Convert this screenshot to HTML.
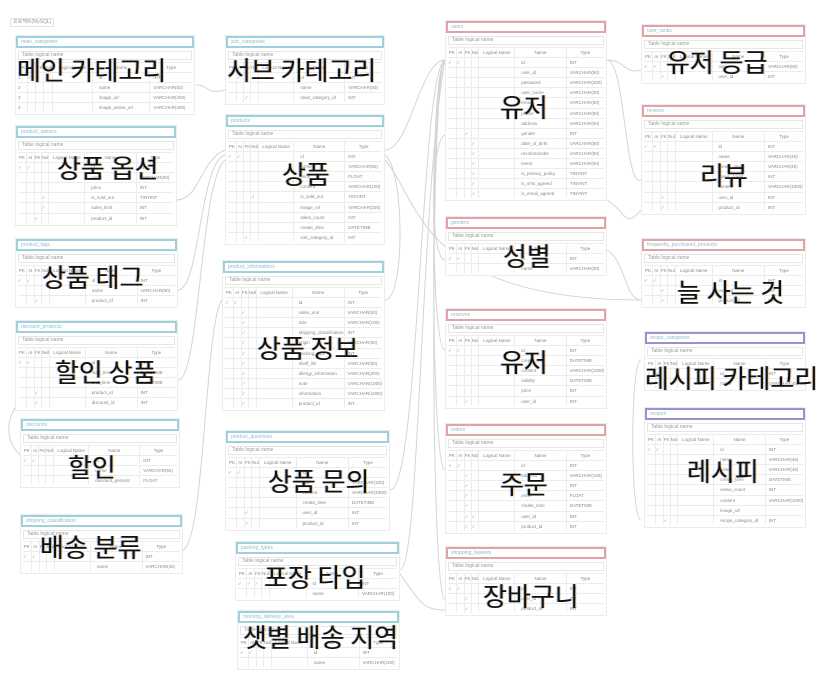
<!DOCTYPE html>
<html><head><meta charset="utf-8"><style>
*{margin:0;padding:0;box-sizing:border-box}
body{width:834px;height:677px;background:#fff;position:relative;overflow:hidden;font-family:"Liberation Sans",sans-serif}
.t{position:absolute;background:#fff;border:1px solid #ececec;padding:0 2px 2px}
.ti{height:12px;border:2px solid #9fd0de;font-size:5px;color:#8cc0cc;line-height:8px;padding-left:3px;margin:0 -2px}
.red .ti{border-color:#e3a2a6}.pur .ti{border-color:#9d8fd6}
.lg{height:9px;border:1px solid #e6e6e6;margin:3px 0 2px;font-size:5px;color:#999;line-height:7px;padding-left:3px}
.r{display:flex;height:10.1px;border-top:1px solid #ececec;font-size:4.5px;color:#888;line-height:9px}
.r i{font-style:normal;border-left:1px solid #ececec;overflow:hidden;white-space:nowrap;color:#5aa9c0}
.r i:nth-child(1){width:5%;border-left:none}.r i:nth-child(2){width:5%}.r i:nth-child(3){width:4.5%}.r i:nth-child(4){width:5%}
.r i:nth-child(5){width:23%}.r i:nth-child(6){width:33%;padding-left:6px;color:#888}.r i:nth-child(7){flex:1;padding-left:3px;color:#888}
.h i{color:#888!important;text-align:center;padding-left:0!important}
.L{position:absolute;font-family:"Noto Sans CJK KR","NanumGothic",sans-serif;font-size:26px;line-height:30px;color:#111;white-space:nowrap;text-shadow:1px 0 0 rgba(230,150,40,.5),-1px 0 0 rgba(40,120,230,.4)}
svg{position:absolute;left:0;top:0}
</style></head><body>
<div style="position:absolute;left:10px;top:18px;width:44px;height:9px;border:1px solid #e2e2e2;font-size:5px;color:#999;line-height:7px;padding-left:2px">프로젝트(MySQL)</div>
<svg width="834" height="677" fill="none" stroke="#d4d4d4" stroke-width="1">
<path d="M196 85 C210 85 205 95 225 90"/><path d="M176 200 C200 200 200 160 225 150"/><path d="M178 290 C200 290 200 160 225 155"/>
<path d="M178 380 C200 380 200 180 225 160"/><path d="M20 400 C5 420 5 440 20 455"/><path d="M183 550 C205 540 205 320 222 300"/>
<path d="M385 150 C410 150 420 60 445 60"/><path d="M385 300 C405 300 405 170 385 155"/><path d="M390 490 C420 490 420 70 445 60"/>
<path d="M400 570 C420 570 420 200 445 60"/><path d="M607 60 C625 60 625 75 641 70"/><path d="M607 60 C625 60 625 190 641 180"/>
<path d="M607 250 C625 260 625 300 641 300"/><path d="M445 260 C430 260 430 140 445 135"/><path d="M445 350 C430 350 430 70 445 60"/>
<path d="M445 470 C430 470 430 70 445 60"/><path d="M445 600 C430 600 430 70 445 60"/><path d="M641 360 C630 360 630 520 641 520"/>
<path d="M607 200 C625 210 625 230 641 210"/><path d="M390 560 C420 600 420 610 445 610"/><path d="M385 160 C420 200 420 300 641 300"/>
</svg>

<div class="t" style="left:15px;top:35px;width:180px"><div class="ti">main_categories</div><div class="lg">Table logical name</div>
<div class="r h"><i>PK</i><i>AI</i><i>FK</i><i>Null</i><i>Logical Name</i><i>Name</i><i>Type</i></div>
<div class="r"><i>1</i><i>✓</i><i>✓</i><i></i><i></i><i>id</i><i>INT</i></div><div class="r"><i>2</i><i></i><i></i><i></i><i></i><i>name</i><i>VARCHAR(50)</i></div><div class="r"><i>3</i><i></i><i></i><i></i><i></i><i>image_url</i><i>VARCHAR(200)</i></div><div class="r"><i>4</i><i></i><i></i><i></i><i></i><i>image_active_url</i><i>VARCHAR(200)</i></div></div>

<div class="t" style="left:15px;top:125px;width:162px"><div class="ti">product_options</div><div class="lg">Table logical name</div>
<div class="r h"><i>PK</i><i>AI</i><i>FK</i><i>Null</i><i>Logical Name</i><i>Name</i><i>Type</i></div>
<div class="r"><i>✓</i><i>✓</i><i></i><i></i><i></i><i>id</i><i>INT</i></div><div class="r"><i></i><i></i><i></i><i></i><i></i><i>name</i><i>VARCHAR(50)</i></div><div class="r"><i></i><i></i><i></i><i></i><i></i><i>price</i><i>INT</i></div><div class="r"><i></i><i></i><i></i><i>✓</i><i></i><i>is_sold_out</i><i>TINYINT</i></div><div class="r"><i></i><i></i><i></i><i>✓</i><i></i><i>sales_limit</i><i>INT</i></div><div class="r"><i></i><i></i><i>✓</i><i></i><i></i><i>product_id</i><i>INT</i></div></div>

<div class="t" style="left:15px;top:238px;width:163px"><div class="ti">product_tags</div><div class="lg">Table logical name</div>
<div class="r h"><i>PK</i><i>AI</i><i>FK</i><i>Null</i><i>Logical Name</i><i>Name</i><i>Type</i></div>
<div class="r"><i>✓</i><i>✓</i><i></i><i></i><i></i><i>id</i><i>INT</i></div><div class="r"><i></i><i></i><i></i><i></i><i></i><i>name</i><i>VARCHAR(50)</i></div><div class="r"><i></i><i></i><i>✓</i><i></i><i></i><i>product_id</i><i>INT</i></div></div>

<div class="t" style="left:15px;top:320px;width:163px"><div class="ti">discount_products</div><div class="lg">Table logical name</div>
<div class="r h"><i>PK</i><i>AI</i><i>FK</i><i>Null</i><i>Logical Name</i><i>Name</i><i>Type</i></div>
<div class="r"><i>✓</i><i>✓</i><i></i><i></i><i></i><i>id</i><i>INT</i></div><div class="r"><i></i><i></i><i></i><i></i><i></i><i>start_time</i><i>DATETIME</i></div><div class="r"><i></i><i></i><i></i><i></i><i></i><i>end_time</i><i>DATETIME</i></div><div class="r"><i></i><i></i><i>✓</i><i></i><i></i><i>product_id</i><i>INT</i></div><div class="r"><i></i><i></i><i>✓</i><i></i><i></i><i>discount_id</i><i>INT</i></div></div>

<div class="t" style="left:20px;top:418px;width:160px"><div class="ti">discounts</div><div class="lg">Table logical name</div>
<div class="r h"><i>PK</i><i>AI</i><i>FK</i><i>Null</i><i>Logical Name</i><i>Name</i><i>Type</i></div>
<div class="r"><i>✓</i><i>✓</i><i></i><i></i><i></i><i>id</i><i>INT</i></div><div class="r"><i></i><i></i><i></i><i></i><i></i><i>name</i><i>VARCHAR(50)</i></div><div class="r"><i></i><i></i><i></i><i></i><i></i><i>discount_percent</i><i>FLOAT</i></div></div>

<div class="t" style="left:20px;top:514px;width:163px"><div class="ti">shipping_classification</div><div class="lg">Table logical name</div>
<div class="r h"><i>PK</i><i>AI</i><i>FK</i><i>Null</i><i>Logical Name</i><i>Name</i><i>Type</i></div>
<div class="r"><i>✓</i><i>✓</i><i></i><i></i><i></i><i>id</i><i>INT</i></div><div class="r"><i></i><i></i><i></i><i></i><i></i><i>name</i><i>VARCHAR(45)</i></div></div>

<div class="t" style="left:225px;top:35px;width:160px"><div class="ti">sub_categories</div><div class="lg">Table logical name</div>
<div class="r h"><i>PK</i><i>AI</i><i>FK</i><i>Null</i><i>Logical Name</i><i>Name</i><i>Type</i></div>
<div class="r"><i>✓</i><i>✓</i><i></i><i></i><i></i><i>id</i><i>INT</i></div><div class="r"><i></i><i></i><i></i><i></i><i></i><i>name</i><i>VARCHAR(50)</i></div><div class="r"><i></i><i></i><i>✓</i><i></i><i></i><i>main_category_id</i><i>INT</i></div></div>

<div class="t" style="left:225px;top:114px;width:160px"><div class="ti">products</div><div class="lg">Table logical name</div>
<div class="r h"><i>PK</i><i>AI</i><i>FK</i><i>Null</i><i>Logical Name</i><i>Name</i><i>Type</i></div>
<div class="r"><i>✓</i><i>✓</i><i></i><i></i><i></i><i>id</i><i>INT</i></div><div class="r"><i></i><i></i><i></i><i></i><i></i><i>name</i><i>VARCHAR(50)</i></div><div class="r"><i></i><i></i><i></i><i></i><i></i><i>price</i><i>FLOAT</i></div><div class="r"><i></i><i></i><i></i><i></i><i></i><i>content</i><i>VARCHAR(100)</i></div><div class="r"><i></i><i></i><i></i><i>✓</i><i></i><i>is_sold_out</i><i>TINYINT</i></div><div class="r"><i></i><i></i><i></i><i></i><i></i><i>image_url</i><i>VARCHAR(200)</i></div><div class="r"><i></i><i></i><i></i><i></i><i></i><i>sales_count</i><i>INT</i></div><div class="r"><i></i><i></i><i></i><i></i><i></i><i>create_time</i><i>DATETIME</i></div><div class="r"><i></i><i></i><i>✓</i><i></i><i></i><i>sub_category_id</i><i>INT</i></div></div>

<div class="t" style="left:222px;top:260px;width:163px"><div class="ti">product_informations</div><div class="lg">Table logical name</div>
<div class="r h"><i>PK</i><i>AI</i><i>FK</i><i>Null</i><i>Logical Name</i><i>Name</i><i>Type</i></div>
<div class="r"><i>✓</i><i>✓</i><i></i><i></i><i></i><i>id</i><i>INT</i></div><div class="r"><i></i><i></i><i>✓</i><i></i><i></i><i>sales_unit</i><i>VARCHAR(50)</i></div><div class="r"><i></i><i></i><i>✓</i><i></i><i></i><i>size</i><i>VARCHAR(100)</i></div><div class="r"><i></i><i></i><i>✓</i><i></i><i></i><i>shipping_classification</i><i>INT</i></div><div class="r"><i></i><i></i><i>✓</i><i></i><i></i><i>origin</i><i>VARCHAR(50)</i></div><div class="r"><i></i><i></i><i>✓</i><i></i><i></i><i>packing_type</i><i>INT</i></div><div class="r"><i></i><i></i><i>✓</i><i></i><i></i><i>shelf_life</i><i>VARCHAR(50)</i></div><div class="r"><i></i><i></i><i>✓</i><i></i><i></i><i>allergy_information</i><i>VARCHAR(200)</i></div><div class="r"><i></i><i></i><i>✓</i><i></i><i></i><i>note</i><i>VARCHAR(1000)</i></div><div class="r"><i></i><i></i><i>✓</i><i></i><i></i><i>information</i><i>VARCHAR(1000)</i></div><div class="r"><i></i><i></i><i>✓</i><i></i><i></i><i>product_id</i><i>INT</i></div></div>

<div class="t" style="left:225px;top:430px;width:165px"><div class="ti">product_questions</div><div class="lg">Table logical name</div>
<div class="r h"><i>PK</i><i>AI</i><i>FK</i><i>Null</i><i>Logical Name</i><i>Name</i><i>Type</i></div>
<div class="r"><i>✓</i><i>✓</i><i></i><i></i><i></i><i>id</i><i>INT</i></div><div class="r"><i></i><i></i><i></i><i></i><i></i><i>title</i><i>VARCHAR(100)</i></div><div class="r"><i></i><i></i><i></i><i></i><i></i><i>content</i><i>VARCHAR(1000)</i></div><div class="r"><i></i><i></i><i></i><i></i><i></i><i>create_time</i><i>DATETIME</i></div><div class="r"><i></i><i></i><i>✓</i><i></i><i></i><i>user_id</i><i>INT</i></div><div class="r"><i></i><i></i><i>✓</i><i></i><i></i><i>product_id</i><i>INT</i></div></div>

<div class="t" style="left:235px;top:541px;width:165px"><div class="ti">packing_types</div><div class="lg">Table logical name</div>
<div class="r h"><i>PK</i><i>AI</i><i>FK</i><i>Null</i><i>Logical Name</i><i>Name</i><i>Type</i></div>
<div class="r"><i>✓</i><i>✓</i><i>✓</i><i></i><i></i><i>id</i><i>INT</i></div><div class="r"><i></i><i></i><i></i><i></i><i></i><i>name</i><i>VARCHAR(100)</i></div></div>

<div class="t" style="left:237px;top:610px;width:163px"><div class="ti">morning_delivery_area</div><div class="lg">Table logical name</div>
<div class="r h"><i>PK</i><i>AI</i><i>FK</i><i>Null</i><i>Logical Name</i><i>Name</i><i>Type</i></div>
<div class="r"><i>✓</i><i>✓</i><i></i><i></i><i></i><i>id</i><i>INT</i></div><div class="r"><i></i><i></i><i></i><i></i><i></i><i>name</i><i>VARCHAR(100)</i></div></div>

<div class="t red" style="left:445px;top:20px;width:162px"><div class="ti">users</div><div class="lg">Table logical name</div>
<div class="r h"><i>PK</i><i>AI</i><i>FK</i><i>Null</i><i>Logical Name</i><i>Name</i><i>Type</i></div>
<div class="r"><i>✓</i><i>✓</i><i></i><i></i><i></i><i>id</i><i>INT</i></div><div class="r"><i></i><i></i><i></i><i></i><i></i><i>user_id</i><i>VARCHAR(50)</i></div><div class="r"><i></i><i></i><i></i><i></i><i></i><i>password</i><i>VARCHAR(200)</i></div><div class="r"><i></i><i></i><i></i><i></i><i></i><i>user_name</i><i>VARCHAR(50)</i></div><div class="r"><i></i><i></i><i></i><i></i><i></i><i>email</i><i>VARCHAR(50)</i></div><div class="r"><i></i><i></i><i></i><i></i><i></i><i>phone</i><i>VARCHAR(50)</i></div><div class="r"><i></i><i></i><i></i><i></i><i></i><i>address</i><i>VARCHAR(50)</i></div><div class="r"><i></i><i></i><i>✓</i><i></i><i></i><i>gender</i><i>INT</i></div><div class="r"><i></i><i></i><i></i><i>✓</i><i></i><i>date_of_birth</i><i>VARCHAR(50)</i></div><div class="r"><i></i><i></i><i></i><i>✓</i><i></i><i>recommender</i><i>VARCHAR(50)</i></div><div class="r"><i></i><i></i><i></i><i>✓</i><i></i><i>event</i><i>VARCHAR(50)</i></div><div class="r"><i></i><i></i><i></i><i>✓</i><i></i><i>is_privacy_policy</i><i>TINYINT</i></div><div class="r"><i></i><i></i><i></i><i>✓</i><i></i><i>is_sms_agreed</i><i>TINYINT</i></div><div class="r"><i></i><i></i><i></i><i>✓</i><i></i><i>is_email_agreed</i><i>TINYINT</i></div></div>

<div class="t red" style="left:445px;top:216px;width:162px"><div class="ti">genders</div><div class="lg">Table logical name</div>
<div class="r h"><i>PK</i><i>AI</i><i>FK</i><i>Null</i><i>Logical Name</i><i>Name</i><i>Type</i></div>
<div class="r"><i>✓</i><i>✓</i><i></i><i></i><i></i><i>id</i><i>INT</i></div><div class="r"><i></i><i></i><i></i><i></i><i></i><i>name</i><i>VARCHAR(50)</i></div></div>

<div class="t red" style="left:445px;top:308px;width:162px"><div class="ti">reserves</div><div class="lg">Table logical name</div>
<div class="r h"><i>PK</i><i>AI</i><i>FK</i><i>Null</i><i>Logical Name</i><i>Name</i><i>Type</i></div>
<div class="r"><i>✓</i><i>✓</i><i></i><i></i><i></i><i>id</i><i>INT</i></div><div class="r"><i></i><i></i><i></i><i></i><i></i><i>create_time</i><i>DATETIME</i></div><div class="r"><i></i><i></i><i></i><i></i><i></i><i>content</i><i>VARCHAR(1000)</i></div><div class="r"><i></i><i></i><i></i><i></i><i></i><i>validity</i><i>DATETIME</i></div><div class="r"><i></i><i></i><i></i><i></i><i></i><i>price</i><i>INT</i></div><div class="r"><i></i><i></i><i>✓</i><i></i><i></i><i>user_id</i><i>INT</i></div></div>

<div class="t red" style="left:445px;top:423px;width:162px"><div class="ti">orders</div><div class="lg">Table logical name</div>
<div class="r h"><i>PK</i><i>AI</i><i>FK</i><i>Null</i><i>Logical Name</i><i>Name</i><i>Type</i></div>
<div class="r"><i>✓</i><i>✓</i><i></i><i></i><i></i><i>id</i><i>INT</i></div><div class="r"><i></i><i></i><i>✓</i><i></i><i></i><i>address</i><i>VARCHAR(100)</i></div><div class="r"><i></i><i></i><i>✓</i><i></i><i></i><i>count</i><i>INT</i></div><div class="r"><i></i><i></i><i>✓</i><i></i><i></i><i>price</i><i>FLOAT</i></div><div class="r"><i></i><i></i><i>✓</i><i></i><i></i><i>create_time</i><i>DATETIME</i></div><div class="r"><i></i><i></i><i>✓</i><i>✓</i><i></i><i>user_id</i><i>INT</i></div><div class="r"><i></i><i></i><i>✓</i><i>✓</i><i></i><i>product_id</i><i>INT</i></div></div>

<div class="t red" style="left:445px;top:546px;width:162px"><div class="ti">shopping_baskets</div><div class="lg">Table logical name</div>
<div class="r h"><i>PK</i><i>AI</i><i>FK</i><i>Null</i><i>Logical Name</i><i>Name</i><i>Type</i></div>
<div class="r"><i>✓</i><i>✓</i><i></i><i></i><i></i><i>id</i><i>INT</i></div><div class="r"><i></i><i></i><i>✓</i><i></i><i></i><i>user_id</i><i>INT</i></div><div class="r"><i></i><i></i><i>✓</i><i></i><i></i><i>product_id</i><i>INT</i></div></div>

<div class="t red" style="left:641px;top:24px;width:165px"><div class="ti">user_ranks</div><div class="lg">Table logical name</div>
<div class="r h"><i>PK</i><i>AI</i><i>FK</i><i>Null</i><i>Logical Name</i><i>Name</i><i>Type</i></div>
<div class="r"><i>✓</i><i>✓</i><i></i><i></i><i></i><i>name</i><i>VARCHAR(50)</i></div><div class="r"><i></i><i></i><i>✓</i><i></i><i></i><i>user_id</i><i>INT</i></div></div>

<div class="t red" style="left:641px;top:104px;width:165px"><div class="ti">reviews</div><div class="lg">Table logical name</div>
<div class="r h"><i>PK</i><i>AI</i><i>FK</i><i>Null</i><i>Logical Name</i><i>Name</i><i>Type</i></div>
<div class="r"><i>✓</i><i>✓</i><i></i><i></i><i></i><i>id</i><i>INT</i></div><div class="r"><i></i><i></i><i></i><i></i><i></i><i>name</i><i>VARCHAR(45)</i></div><div class="r"><i></i><i></i><i></i><i></i><i></i><i>create_time</i><i>VARCHAR(45)</i></div><div class="r"><i></i><i></i><i></i><i></i><i></i><i>views_count</i><i>INT</i></div><div class="r"><i></i><i></i><i></i><i></i><i></i><i>content</i><i>VARCHAR(1000)</i></div><div class="r"><i></i><i></i><i>✓</i><i></i><i></i><i>user_id</i><i>INT</i></div><div class="r"><i></i><i></i><i>✓</i><i></i><i></i><i>product_id</i><i>INT</i></div></div>

<div class="t red" style="left:641px;top:238px;width:165px"><div class="ti">frequently_purchased_products</div><div class="lg">Table logical name</div>
<div class="r h"><i>PK</i><i>AI</i><i>FK</i><i>Null</i><i>Logical Name</i><i>Name</i><i>Type</i></div>
<div class="r"><i>✓</i><i>✓</i><i></i><i></i><i></i><i>id</i><i>INT</i></div><div class="r"><i></i><i></i><i>✓</i><i></i><i></i><i>user_id</i><i>INT</i></div><div class="r"><i></i><i></i><i>✓</i><i></i><i></i><i>product_id</i><i>INT</i></div></div>

<div class="t pur" style="left:644px;top:331px;width:162px"><div class="ti">recipe_categories</div><div class="lg">Table logical name</div>
<div class="r h"><i>PK</i><i>AI</i><i>FK</i><i>Null</i><i>Logical Name</i><i>Name</i><i>Type</i></div>
<div class="r"><i>✓</i><i>✓</i><i></i><i></i><i></i><i>id</i><i>INT</i></div><div class="r"><i></i><i></i><i></i><i></i><i></i><i>name</i><i>VARCHAR(45)</i></div></div>

<div class="t pur" style="left:644px;top:407px;width:162px"><div class="ti">recipes</div><div class="lg">Table logical name</div>
<div class="r h"><i>PK</i><i>AI</i><i>FK</i><i>Null</i><i>Logical Name</i><i>Name</i><i>Type</i></div>
<div class="r"><i>✓</i><i>✓</i><i></i><i></i><i></i><i>id</i><i>INT</i></div><div class="r"><i></i><i></i><i></i><i></i><i></i><i>name</i><i>VARCHAR(45)</i></div><div class="r"><i></i><i></i><i></i><i></i><i></i><i>writer</i><i>VARCHAR(45)</i></div><div class="r"><i></i><i></i><i></i><i></i><i></i><i>create_time</i><i>DATETIME</i></div><div class="r"><i></i><i></i><i></i><i></i><i></i><i>views_count</i><i>INT</i></div><div class="r"><i></i><i></i><i></i><i></i><i></i><i>content</i><i>VARCHAR(1000)</i></div><div class="r"><i></i><i></i><i></i><i></i><i></i><i>image_url</i><i></i></div><div class="r"><i></i><i></i><i>✓</i><i></i><i></i><i>recipe_category_id</i><i>INT</i></div></div>

<div class="L" style="left:17px;top:55px">메인 카테고리</div>
<div class="L" style="left:227px;top:55px">서브 카테고리</div>
<div class="L" style="left:57px;top:153px">상품 옵션</div>
<div class="L" style="left:42px;top:262px">상품 태그</div>
<div class="L" style="left:55px;top:357px">할인 상품</div>
<div class="L" style="left:68px;top:452px">할인</div>
<div class="L" style="left:40px;top:532px">배송 분류</div>
<div class="L" style="left:282px;top:159px">상품</div>
<div class="L" style="left:257px;top:333px">상품 정보</div>
<div class="L" style="left:268px;top:466px">상품 문의</div>
<div class="L" style="left:264px;top:562px">포장 타입</div>
<div class="L" style="left:243px;top:622px">샛별 배송 지역</div>
<div class="L" style="left:500px;top:92px">유저</div>
<div class="L" style="left:503px;top:241px">성별</div>
<div class="L" style="left:500px;top:347px">유저</div>
<div class="L" style="left:500px;top:469px">주문</div>
<div class="L" style="left:483px;top:581px">장바구니</div>
<div class="L" style="left:666px;top:47px">유저 등급</div>
<div class="L" style="left:700px;top:160px">리뷰</div>
<div class="L" style="left:677px;top:277px">늘 사는 것</div>
<div class="L" style="left:645px;top:363px">레시피 카테고리</div>
<div class="L" style="left:687px;top:456px">레시피</div>
</body></html>
